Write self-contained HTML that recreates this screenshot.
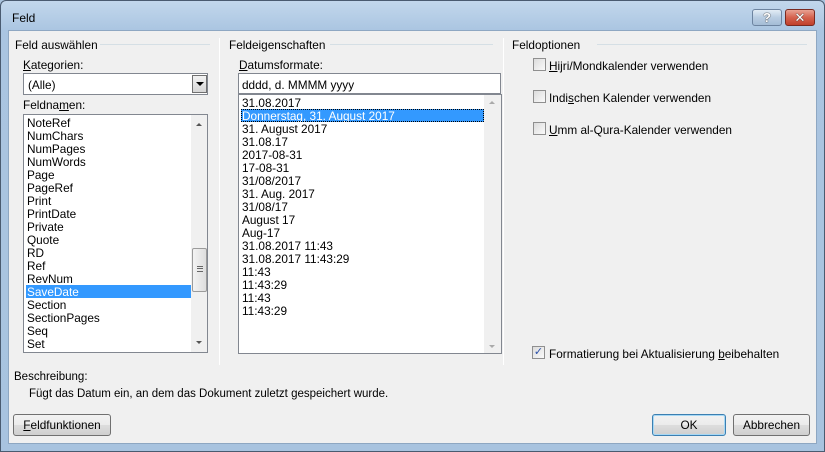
<!DOCTYPE html>
<html><head><meta charset="utf-8"><style>
*{margin:0;padding:0;box-sizing:border-box}
body{width:825px;height:452px;overflow:hidden;font-family:"Liberation Sans","DejaVu Sans",sans-serif;font-size:11.8px;color:#000;background:#a9c3dd;position:relative}
.a{position:absolute;white-space:nowrap}
.frame{left:0;top:0;width:825px;height:452px;border:1px solid #4a5b70;border-radius:6px 6px 0 0;background:linear-gradient(#c2d7ec 0,#aac5e1 30px,#a8c3df 100%)}
.client{left:8px;top:30px;width:809px;height:414px;background:#f0f0f0;border:1px solid #8ea7c2}
.lbl{line-height:14px}
.sep{height:1px;background:#d5dfe5}
.vsep{width:1px;background:#a0a0a0;border-right:1px solid #fff}
.box{background:#fff;border:1px solid #828790}
.item{position:absolute;left:2px;height:13px;line-height:14px;padding-left:1px}
.sb{background:#f0f0f0}
.cb{width:13px;height:13px;border:1px solid #8f8f8f;background:linear-gradient(135deg,#dcdcdc,#fafafa)}
.btn{border:1px solid #707070;border-radius:3px;background:linear-gradient(#f2f2f2 0,#ebebeb 50%,#dddddd 51%,#cfcfcf 100%);text-align:center;line-height:20px}
u{text-decoration:underline}
</style></head><body>
<div class="a frame"></div>
<div class="a" style="left:12px;top:11px;font-size:12px">Feld</div>
<div class="a" style="left:752px;top:9px;width:30px;height:17px;border:1px solid #6d84a0;border-radius:3px;background:linear-gradient(#e3ecf5,#b9cde2 50%,#a4bcd6);text-align:center;font-weight:bold;color:#fff;font-size:13px;line-height:15px;text-shadow:0 0 1px #333,0 0 1px #333">?</div>
<div class="a" style="left:785px;top:9px;width:30px;height:17px;border:1px solid #7a2a20;border-radius:3px;background:linear-gradient(#e8a293,#d5624e 50%,#c0402b);text-align:center;font-weight:bold;color:#fff;font-size:13px;line-height:15px;text-shadow:0 0 1px #333,0 0 1px #333">✕</div>
<div class="a client"></div>

<div class="a lbl" style="left:15px;top:38px">Feld auswählen</div>
<div class="a sep" style="left:100px;top:44px;width:110px"></div>
<div class="a vsep" style="left:219px;top:38px;height:327px"></div>
<div class="a lbl" style="left:23px;top:58px"><u>K</u>ategorien:</div>
<div class="a box" style="left:23px;top:73px;width:185px;height:22px"><div class="a" style="left:4px;top:4px">(Alle)</div>
<div class="a" style="left:168px;top:1px;width:15px;height:18px;border:1px solid #707070;background:linear-gradient(#f2f2f2,#d6d6d6)"></div>
<div class="a" style="left:172px;top:8px;width:0;height:0;border-left:4px solid transparent;border-right:4px solid transparent;border-top:4px solid #000"></div></div>
<div class="a lbl" style="left:23px;top:98px">Feldna<u>m</u>en:</div>
<div class="a box" style="left:23px;top:114px;width:185px;height:239px;overflow:hidden">
<div class="item" style="top:1px">NoteRef</div><div class="item" style="top:14px">NumChars</div><div class="item" style="top:27px">NumPages</div><div class="item" style="top:40px">NumWords</div><div class="item" style="top:53px">Page</div><div class="item" style="top:66px">PageRef</div><div class="item" style="top:79px">Print</div><div class="item" style="top:92px">PrintDate</div><div class="item" style="top:105px">Private</div><div class="item" style="top:118px">Quote</div><div class="item" style="top:131px">RD</div><div class="item" style="top:144px">Ref</div><div class="item" style="top:157px">RevNum</div><div class="item" style="top:170px;width:165px;background:#3399ff;color:#fff">SaveDate</div><div class="item" style="top:183px">Section</div><div class="item" style="top:196px">SectionPages</div><div class="item" style="top:209px">Seq</div><div class="item" style="top:222px">Set</div>
<div class="a sb" style="left:167px;top:0;width:17px;height:237px"></div>
<div class="a" style="left:172px;top:8px;border-left:3px solid transparent;border-right:3px solid transparent;border-bottom:3px solid #555"></div>
<div class="a" style="left:168px;top:133px;width:15px;height:44px;border:1px solid #9b9b9b;border-radius:2px;background:linear-gradient(90deg,#f3f3f3,#dedede)"><div class="a" style="left:4px;top:17px;width:6px;height:6px;border-top:1px solid #666;border-bottom:1px solid #666"></div><div class="a" style="left:4px;top:19px;width:6px;height:1px;background:#666"></div></div>
<div class="a" style="left:172px;top:226px;border-left:3px solid transparent;border-right:3px solid transparent;border-top:3px solid #555"></div>
</div>

<div class="a lbl" style="left:229px;top:38px">Feldeigenschaften</div>
<div class="a sep" style="left:330px;top:44px;width:163px"></div>
<div class="a vsep" style="left:503px;top:38px;height:327px"></div>
<div class="a lbl" style="left:239px;top:58px"><u>D</u>atumsformate:</div>
<div class="a box" style="left:238px;top:73px;width:263px;height:21px"><div class="a" style="left:3px;top:4px">dddd, d. MMMM yyyy</div></div>
<div class="a box" style="left:238px;top:94px;width:264px;height:260px;overflow:hidden">
<div class="item" style="top:1px">31.08.2017</div>
<div class="item" style="top:14px;width:243px;background:#3399ff;color:#fff;outline:1px dotted #000;outline-offset:-1px">Donnerstag, 31. August 2017</div>
<div class="item" style="top:27px">31. August 2017</div><div class="item" style="top:40px">31.08.17</div><div class="item" style="top:53px">2017-08-31</div><div class="item" style="top:66px">17-08-31</div><div class="item" style="top:79px">31/08/2017</div><div class="item" style="top:92px">31. Aug. 2017</div><div class="item" style="top:105px">31/08/17</div><div class="item" style="top:118px">August 17</div><div class="item" style="top:131px">Aug-17</div><div class="item" style="top:144px">31.08.2017 11:43</div><div class="item" style="top:157px">31.08.2017 11:43:29</div><div class="item" style="top:170px">11:43</div><div class="item" style="top:183px">11:43:29</div><div class="item" style="top:196px">11:43</div><div class="item" style="top:209px">11:43:29</div>
<div class="a sb" style="left:245px;top:0;width:17px;height:258px"></div>
<div class="a" style="left:250px;top:6px;border-left:3px solid transparent;border-right:3px solid transparent;border-bottom:3px solid #aaa"></div>
<div class="a" style="left:250px;top:250px;border-left:3px solid transparent;border-right:3px solid transparent;border-top:3px solid #aaa"></div>
</div>

<div class="a lbl" style="left:512px;top:38px">Feldoptionen</div>
<div class="a sep" style="left:597px;top:44px;width:210px"></div>
<div class="a cb" style="left:533px;top:58px"></div><div class="a lbl" style="left:549px;top:59px"><u>H</u>ijri/Mondkalender verwenden</div>
<div class="a cb" style="left:533px;top:90px"></div><div class="a lbl" style="left:549px;top:91px">Indi<u>s</u>chen Kalender verwenden</div>
<div class="a cb" style="left:533px;top:122px"></div><div class="a lbl" style="left:549px;top:123px"><u>U</u>mm al-Qura-Kalender verwenden</div>
<div class="a cb" style="left:532px;top:346px;color:#2a4fa8;font-size:11px;line-height:11px;text-align:center;font-weight:bold">✓</div><div class="a lbl" style="left:549px;top:347px">Formatierung bei Aktualisierung <u>b</u>eibehalten</div>

<div class="a lbl" style="left:14px;top:370px;font-size:11.5px">Beschreibung:</div>
<div class="a lbl" style="left:29px;top:387px;font-size:11.5px">Fügt das Datum ein, an dem das Dokument zuletzt gespeichert wurde.</div>

<div class="a btn" style="left:13px;top:414px;width:98px;height:22px"><u>F</u>eldfunktionen</div>
<div class="a btn" style="left:652px;top:414px;width:74px;height:22px;border-color:#3c7fb1;box-shadow:inset 0 0 0 1px #a6d8f5">OK</div>
<div class="a btn" style="left:733px;top:414px;width:77px;height:22px">Abbrechen</div>
</body></html>
